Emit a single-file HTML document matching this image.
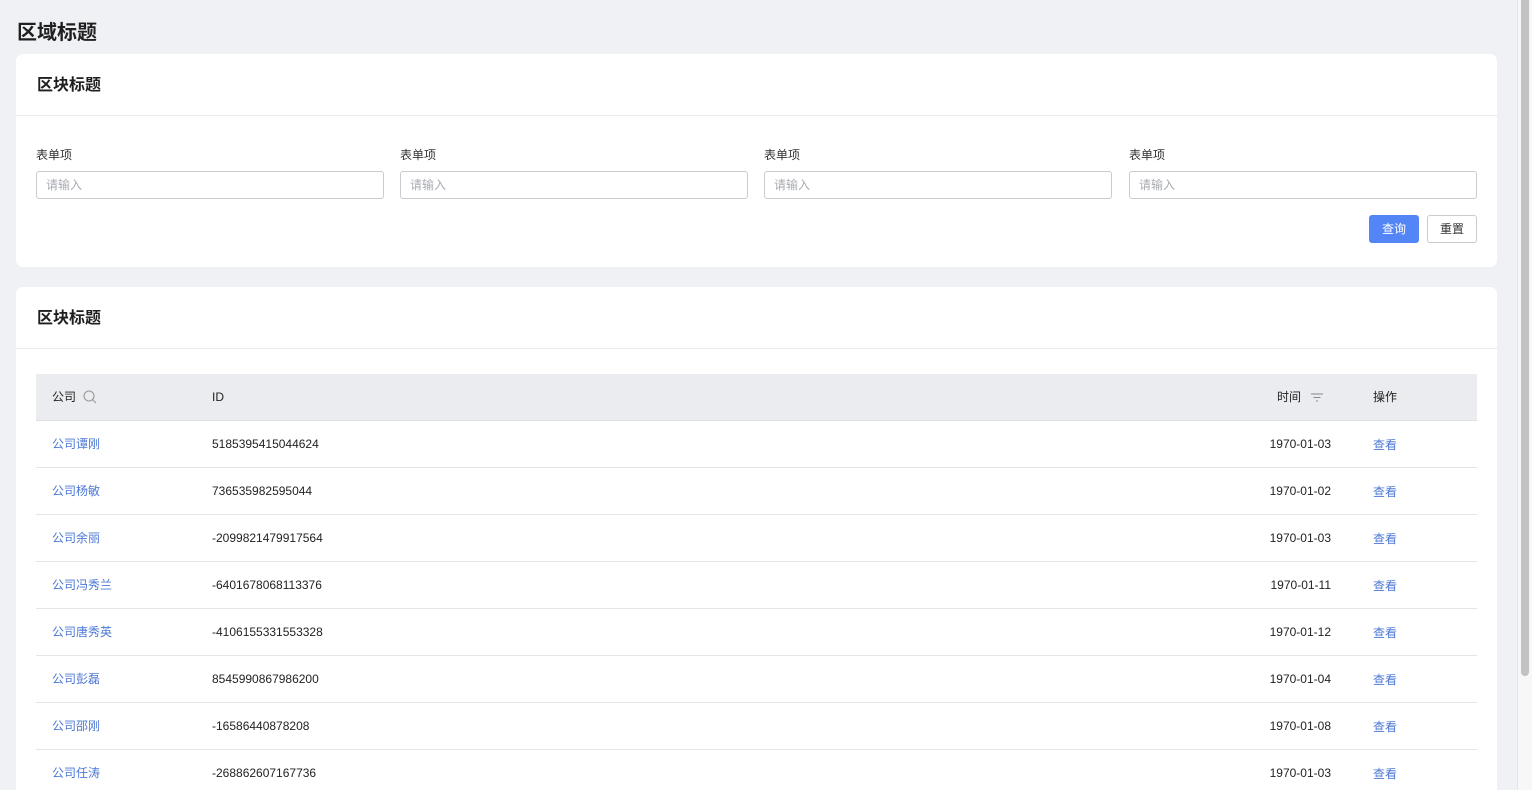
<!DOCTYPE html>
<html><head><meta charset="utf-8">
<style>
*{box-sizing:border-box;margin:0;padding:0}
html,body{width:1532px;height:790px;overflow:hidden}
body{background:#f0f1f5;font-family:"Liberation Sans","Noto Sans CJK SC",sans-serif;color:#222;position:relative}
.h1{position:absolute;left:17px;top:21px;font-size:20px;font-weight:bold;color:#1f1f1f;line-height:24px}
.card{position:absolute;left:16px;width:1481px;background:#fff;border-radius:7px}
.ch{height:62px;border-bottom:1px solid #e8e9ec;padding-left:21px;padding-top:1px;font-size:16px;font-weight:bold;line-height:62px;color:#1f1f1f}
.lbl{position:absolute;top:93px;font-size:12px;color:#333;line-height:16px}
.inp{position:absolute;top:117px;width:348px;height:28px;border:1px solid #c9cbd0;border-radius:3px;font-size:12px;color:#a8abb2;line-height:26px;padding-left:9px}
.btn{position:absolute;top:161px;width:50px;height:28px;border-radius:3px;font-size:12px;line-height:26px;text-align:center}
.pri{left:1353px;background:#5485f7;color:#fff;border:1px solid #5485f7}
.def{left:1411px;background:#fff;color:#333;border:1px solid #c9cbd0}
table{position:absolute;left:20px;top:87px;width:1441px;border-collapse:collapse;font-size:12px}
th{background:#ebecef;height:46px;font-weight:normal;text-align:left;color:#222;border-bottom:1px solid #dfe0e3}
td{height:47px;border-bottom:1px solid #e4e5e8;color:#222}
td.c,th.c{padding-left:16px;width:176px}
td.c a{color:#4d78d6}
td.t,th.t{text-align:right;padding-right:0;width:100px}
td.o,th.o{padding-left:42px;width:146px}
td.o{color:#4d78d6;padding-top:2px}
.sb{position:absolute;left:1517px;top:0;width:15px;height:790px;background:#f7f7f8;border-left:1px solid #e6e6e8}
.th{position:absolute;left:1521px;top:0;width:8px;height:676px;background:#c2c2c2;border-radius:0 0 4px 4px}
</style></head><body>
<div class="h1">区域标题</div>
<div class="card" style="top:54px;height:213px">
<div class="ch">区块标题</div>
<div class="lbl" style="left:20px">表单项</div><div class="inp" style="left:20px">请输入</div>
<div class="lbl" style="left:384px">表单项</div><div class="inp" style="left:384px">请输入</div>
<div class="lbl" style="left:748px">表单项</div><div class="inp" style="left:748px">请输入</div>
<div class="lbl" style="left:1113px">表单项</div><div class="inp" style="left:1113px">请输入</div>
<div class="btn pri">查询</div><div class="btn def">重置</div>
</div>
<div class="card" style="top:287px;height:520px">
<div class="ch">区块标题</div>
<table>
<tr><th class="c">公司 <svg width="16" height="16" viewBox="0 0 16 16" style="vertical-align:-4px;margin-left:3px"><circle cx="7" cy="7" r="5" fill="none" stroke="#999" stroke-width="1.1"/><path d="M10.6 10.6L14 14" stroke="#999" stroke-width="1.1"/></svg></th><th>ID</th><th class="t" style="text-align:right">时间<svg width="14" height="12" viewBox="0 0 14 12" style="vertical-align:-2px;margin-left:9px;margin-right:7px"><path d="M1 3h12M3.5 6.5h7M6 10h2" stroke="#888" stroke-width="1.1"/></svg></th><th class="o">操作</th></tr>
<tr><td class="c"><a>公司谭刚</a></td><td>5185395415044624</td><td class="t">1970-01-03</td><td class="o">查看</td></tr>
<tr><td class="c"><a>公司杨敏</a></td><td>736535982595044</td><td class="t">1970-01-02</td><td class="o">查看</td></tr>
<tr><td class="c"><a>公司余丽</a></td><td>-2099821479917564</td><td class="t">1970-01-03</td><td class="o">查看</td></tr>
<tr><td class="c"><a>公司冯秀兰</a></td><td>-6401678068113376</td><td class="t">1970-01-11</td><td class="o">查看</td></tr>
<tr><td class="c"><a>公司唐秀英</a></td><td>-4106155331553328</td><td class="t">1970-01-12</td><td class="o">查看</td></tr>
<tr><td class="c"><a>公司彭磊</a></td><td>8545990867986200</td><td class="t">1970-01-04</td><td class="o">查看</td></tr>
<tr><td class="c"><a>公司邵刚</a></td><td>-16586440878208</td><td class="t">1970-01-08</td><td class="o">查看</td></tr>
<tr><td class="c"><a>公司任涛</a></td><td>-268862607167736</td><td class="t">1970-01-03</td><td class="o">查看</td></tr>
</table>
</div>
<div class="sb"></div><div class="th"></div>
</body></html>
